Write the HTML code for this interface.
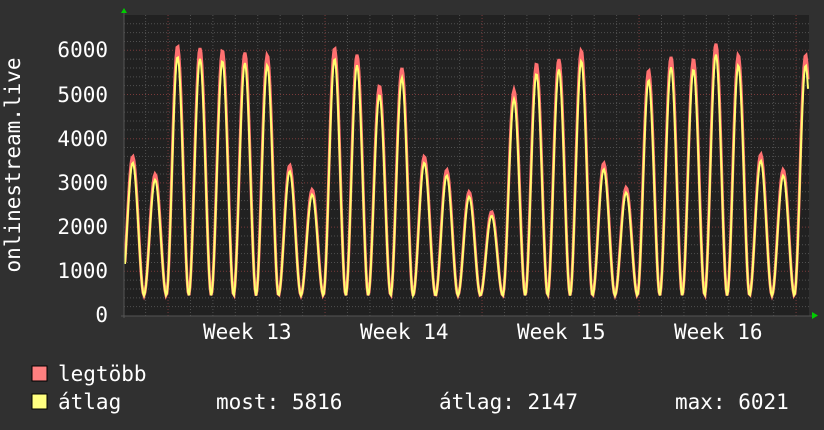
<!DOCTYPE html>
<html><head><meta charset="utf-8"><style>
html,body{margin:0;padding:0;background:#303030;}
svg{display:block}
text{font-family:"DejaVu Sans Mono","Liberation Mono",monospace;font-size:21px;fill:#fff}
</style></head><body>
<svg id="s" width="824" height="430" viewBox="0 0 824 430">
<rect width="824" height="430" fill="#303030"/>
<rect x="124" y="15" width="685" height="301" fill="#212121"/>
<g id="grid"></g>
<g id="data"></g>
<line x1="121" y1="316" x2="812" y2="316" stroke="#555" stroke-width="1"/>
<line x1="124" y1="12" x2="124" y2="318" stroke="#555" stroke-width="1"/>
<polygon points="121,13 127,13 124,8" fill="#0c0"/>
<polygon points="812,312 812,319 818,315.5" fill="#0c0"/>
<text x="108" y="57" text-anchor="end">6000</text>
<text x="108" y="102" text-anchor="end">5000</text>
<text x="108" y="146" text-anchor="end">4000</text>
<text x="108" y="190" text-anchor="end">3000</text>
<text x="108" y="234" text-anchor="end">2000</text>
<text x="108" y="278" text-anchor="end">1000</text>
<text x="108" y="322" text-anchor="end">0</text>
<text transform="translate(20,165) rotate(-90)" text-anchor="middle">onlinestream.live</text>
<text x="203" y="339">Week 13</text>
<text x="360" y="339">Week 14</text>
<text x="517" y="339">Week 15</text>
<text x="674" y="339">Week 16</text>
<rect x="32" y="366" width="15" height="15" fill="#ff8080" stroke="#000" stroke-width="1"/>
<rect x="32" y="394" width="15" height="15" fill="#ffff80" stroke="#000" stroke-width="1"/>
<text x="58" y="381">legtöbb</text>
<text x="58" y="409">átlag</text>
<text x="216" y="409">most: 5816</text>
<text x="439" y="409">átlag: 2147</text>
<text x="675" y="409">max: 6021</text>
</svg>
<script>
var ns="http://www.w3.org/2000/svg",g=document.getElementById('grid'),d=document.getElementById('data');
function ln(x1,y1,x2,y2,c){var l=document.createElementNS(ns,'line');l.setAttribute('x1',x1);l.setAttribute('y1',y1);l.setAttribute('x2',x2);l.setAttribute('y2',y2);l.setAttribute('stroke',c);l.setAttribute('stroke-dasharray','1,2');g.appendChild(l);}
var y0=315.5,k=44.2/1000;
for(var v=200;v<=6800;v+=200){var y=y0-v*k;if(y<15)break;ln(124,y,809,y,v%1000==0?'#7a3a3a':'#505050');}
for(var x=145.6;x<809;x+=22.43){var maj=Math.abs(((x-168)/157)-Math.round((x-168)/157))<0.02;ln(x,15,x,316,maj?'#7a3a3a':'#505050');}
var peaks=[3600,3200,6100,6050,6000,5950,5900,3400,2850,6050,5900,5200,5600,3600,3300,2800,2350,5100,5700,5800,6000,3450,2900,5550,5850,5800,6150,5900,3650,3300,5900];
function val(x,f){var t=(x-121.5)/22.43;var i=Math.floor(t),fr=t-i;
 var p=peaks[Math.min(Math.max(i,0),peaks.length-1)];
 var s=Math.sin(Math.PI*Math.min(Math.max(fr,0),1));s=Math.pow(s,1.9);
 return 450+(p*f-450)*s;}
function path(f,c,w){var s='';for(var x=125;x<=808;x+=1){var y=y0-val(x,f)*k;s+=(x==125?'M':'L')+x+','+y.toFixed(1);}
 var p=document.createElementNS(ns,'path');p.setAttribute('d',s);p.setAttribute('fill','none');p.setAttribute('stroke',c);p.setAttribute('stroke-width',w);d.appendChild(p);}
path(1,'#ff7070',3);path(0.96,'#ffff70',2);
</script>
</body></html>
